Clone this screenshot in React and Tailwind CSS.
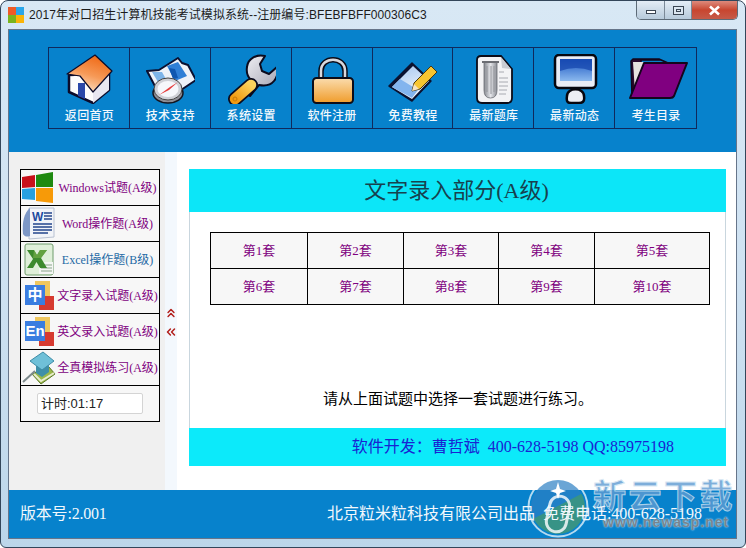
import React from 'react';
import { ChevronsUp, ChevronsLeft } from 'lucide-react';

const sans = 'font-["Liberation_Sans","Noto_Sans_CJK_SC",sans-serif]';
const serif = 'font-["Liberation_Serif","Noto_Sans_CJK_SC",serif]';

const HomeIcon = () => (
  <svg width="50" height="50" viewBox="0 0 50 50">
    <defs>
      <linearGradient id="roof" x1="0.75" y1="0" x2="0.35" y2="1">
        <stop offset="0" stopColor="#ef6510" />
        <stop offset="0.55" stopColor="#f69a58" />
        <stop offset="1" stopColor="#fde3c8" />
      </linearGradient>
    </defs>
    <path d="M5 21 V38 L29 49 L45 36 V18 L29 20 Z" fill="#fdfcfc" stroke="#0b0b2a" strokeWidth="2.5" strokeLinejoin="round" />
    <path d="M29 49 L45 36 V20 L29 38 Z" fill="#e9e7f0" />
    <path d="M3 20 L31 1 L48 17 L29 38 L16 22 Z" fill="url(#roof)" stroke="#0b0b2a" strokeWidth="1.2" strokeLinejoin="round" />
    <path d="M14 29 H21 V45 L14 42 Z" fill="#2a47a8" />
  </svg>
);

const CompassIcon = () => (
  <svg width="50" height="50" viewBox="0 0 50 50">
    <path d="M2 17 L14 16 L33 4 L37 9 L43 11 L51 26 L36 36 L12 36 Z" fill="#eef2f8" stroke="#0b1030" strokeWidth="2" strokeLinejoin="round" />
    <path d="M7 18 L17 18 L22 27 L13 28 Z" fill="#7db4e8" />
    <path d="M22 12 L33 8 L42 22 L30 27 Z" fill="#2f7fd6" />
    <path d="M24 14 L30 15 L33 24 L28 25 Z" fill="#0f57b0" />
    <ellipse cx="23" cy="39" rx="15" ry="10" fill="#8d8d95" stroke="#15151f" strokeWidth="1.5" />
    <ellipse cx="23" cy="35" rx="14" ry="11" fill="#cfd0d6" stroke="#444" strokeWidth="1" />
    <ellipse cx="23" cy="35" rx="10.5" ry="8" fill="#f6f7fb" />
    <path d="M14 41 L25 33 L33 28 L24 36 Z" fill="#e63b3b" />
  </svg>
);

const WrenchIcon = () => (
  <svg width="50" height="50" viewBox="0 0 50 50">
    <defs>
      <linearGradient id="steel" x1="0" y1="0" x2="1" y2="1">
        <stop offset="0" stopColor="#f4f4f8" />
        <stop offset="1" stopColor="#9d9dac" />
      </linearGradient>
      <linearGradient id="grip" x1="0" y1="1" x2="1" y2="0">
        <stop offset="0" stopColor="#f29a10" />
        <stop offset="1" stopColor="#fbd25c" />
      </linearGradient>
    </defs>
    <path d="M39 2 C31 0 22 4 21 13 C20 19 22 23 25 26 L16 35 L24 42 L33 31 C38 32 44 32 48 27 C52 22 52 17 51 13 L43 20 L36 17 L34 10 Z" fill="url(#steel)" stroke="#0b0b1e" strokeWidth="2" strokeLinejoin="round" />
    <path d="M9 45 L25 31" stroke="#0b0b1e" strokeWidth="14" strokeLinecap="round" />
    <path d="M9 45 L25 31" stroke="url(#grip)" strokeWidth="10.5" strokeLinecap="round" />
    <circle cx="9" cy="45" r="2" fill="none" stroke="#c97a08" strokeWidth="1" />
  </svg>
);

const LockIcon = () => (
  <svg width="50" height="50" viewBox="0 0 50 50">
    <defs>
      <linearGradient id="lock" x1="0" y1="0" x2="0" y2="1">
        <stop offset="0" stopColor="#fadcae" />
        <stop offset="1" stopColor="#f09c2a" />
      </linearGradient>
    </defs>
    <path d="M14 26 V17 C14 2 38 2 38 17 V26" fill="none" stroke="#0c0c18" strokeWidth="5.5" />
    <path d="M14 26 V17 C14 2 38 2 38 17 V26" fill="none" stroke="#d9d9de" strokeWidth="2.5" />
    <rect x="6" y="24" width="40" height="25" rx="3.5" fill="url(#lock)" stroke="#0c0c18" strokeWidth="2" />
  </svg>
);

const BookIcon = () => (
  <svg width="50" height="50" viewBox="0 0 50 50">
    <defs>
      <linearGradient id="page" x1="0.2" y1="0" x2="0.6" y2="1">
        <stop offset="0" stopColor="#a9c9f0" />
        <stop offset="1" stopColor="#f6f9fd" />
      </linearGradient>
    </defs>
    <path d="M2 32 L25 9 L44 27 L25 47 Z" fill="#0b1230" stroke="#0b1230" strokeWidth="1.5" strokeLinejoin="round" />
    <path d="M5 33 L26 12 L42 27 L25 45 Z" fill="url(#page)" />
    <path d="M5 33 L13 25 L31 36 L25 44 Z" fill="#83b4ee" />
    <path d="M25 37 L27 29 L44 12 L50 18 L33 35 Z" fill="#f7c531" stroke="#4a3a10" strokeWidth="1" strokeLinejoin="round" />
    <path d="M25 37 L27 30 L32 35 Z" fill="#f6e2c0" />
  </svg>
);

const ArchiveIcon = () => (
  <svg width="50" height="50" viewBox="0 0 50 50">
    <defs>
      <linearGradient id="tube" x1="0" y1="0" x2="1" y2="0">
        <stop offset="0" stopColor="#85888f" />
        <stop offset="0.5" stopColor="#e5e6ea" />
        <stop offset="1" stopColor="#8a8d94" />
      </linearGradient>
    </defs>
    <path d="M13 2 H33 L44 15 V44 Q44 49 39 49 H14 Q9 49 9 44 V6 Q9 2 13 2 Z" fill="#f3f3f5" stroke="#0c0c18" strokeWidth="1.8" />
    <path d="M33 3 L34 14 L43 15 Z" fill="#c9ccd2" />
    <path d="M31 24 H40 M31 28 H40 M31 32 H40 M31 36 H39 M31 40 H38 M31 18 H36" stroke="#a8aab1" strokeWidth="1" />
    <path d="M16 8 H29 V36 Q29 44 22.5 44 Q16 44 16 36 Z" fill="url(#tube)" stroke="#6b6d73" strokeWidth="0.8" />
    <path d="M14 8 H31" stroke="#6b6d73" strokeWidth="2" />
    <path d="M19 12 V38 M23 12 V40 M26 12 V38" stroke="#93959b" strokeWidth="1" />
  </svg>
);

const MonitorIcon = () => (
  <svg width="50" height="50" viewBox="0 0 50 50">
    <defs>
      <linearGradient id="screen" x1="0" y1="0" x2="0" y2="1">
        <stop offset="0" stopColor="#1a56c2" />
        <stop offset="1" stopColor="#8bb9ee" />
      </linearGradient>
    </defs>
    <path d="M18 42 C18 33 35 33 35 42 C36 48 33 49 30 49 H22 C19 49 17 48 18 42 Z" fill="#eceef4" stroke="#07070f" strokeWidth="2.5" />
    <rect x="6" y="1" width="41" height="33" rx="4" fill="#e9edf6" stroke="#07070f" strokeWidth="2.5" />
    <rect x="11" y="5" width="32" height="22" fill="url(#screen)" />
    <path d="M11 5 H43 V17 Q27 11 11 17 Z" fill="#1747ad" opacity="0.75" />
  </svg>
);

const FolderIcon = () => (
  <svg width="50" height="50" viewBox="0 0 50 50" className="overflow-visible">
    <path d="M0 7 L1 44 L10 44 L10 6 L30 6 L37 9 L28 5 L2 5 Z" fill="#2a0a2e" stroke="#12061a" strokeWidth="1.5" strokeLinejoin="round" />
    <path d="M2 8 H13 L4 38 Z" fill="#e6e3df" />
    <path d="M13 9 L56 9 L43 42 Q42 44 39 44 L-1 44 Z" fill="#800080" stroke="#15051c" strokeWidth="2" strokeLinejoin="round" />
  </svg>
);

const tools = [
  { label: '返回首页', Icon: HomeIcon },
  { label: '技术支持', Icon: CompassIcon },
  { label: '系统设置', Icon: WrenchIcon },
  { label: '软件注册', Icon: LockIcon },
  { label: '免费教程', Icon: BookIcon },
  { label: '最新题库', Icon: ArchiveIcon },
  { label: '最新动态', Icon: MonitorIcon },
  { label: '考生目录', Icon: FolderIcon },
];

const WinTile = () => (
  <svg width="36" height="35" viewBox="0 0 36 35">
    <path d="M1 7 L14 5 V17 L1 18 Z" fill="#c8101a" />
    <path d="M15 5 L32 2 V17 L15 17 Z" fill="#1f8a10" />
    <path d="M1 19 L14 18 V30 L1 29 Z" fill="#27a0e0" />
    <path d="M15 18 H32 V33 L15 31 Z" fill="#f79a08" />
  </svg>
);

const WordTile = () => (
  <svg width="36" height="35" viewBox="0 0 36 35">
    <path d="M8 2 H33 V31 L8 33 Z" fill="#f2f4f8" stroke="#b9c2d2" />
    <path d="M2 28 C1 16 3 7 9 2 L9 30 C6 31 4 31 2 28 Z" fill="#7d97c6" />
    <text x="11" y="15" fontSize="12" fontWeight="700" fill="#1d4a9e" fontFamily="Liberation Sans">W</text>
    <path d="M23 7 H31 M23 10 H31 M23 13 H31 M12 18 H31 M12 21 H31 M12 24 H31 M12 27 H27" stroke="#24468c" strokeWidth="1.3" />
  </svg>
);

const ExcelTile = () => (
  <svg width="36" height="35" viewBox="0 0 36 35">
    <rect x="4" y="2" width="28" height="31" rx="2" fill="#dfefd9" stroke="#6f9c6c" />
    <path d="M18 20 H32 V32 H18 Z" fill="#f4f6f4" />
    <path d="M20 23 H31 M20 26 H31 M20 29 H31" stroke="#8aa58a" />
    <path d="M6 8 H13 L16 13 L19 8 H26 L20 16 L26 26 H19 L15.500 20 L12 26 H6 L12 17 Z" fill="#3d8a2e" />
    <path d="M13 8 L16 13 L19 8 H26 L20 16 H12 Z" fill="#74ad48" opacity="0.7" />
  </svg>
);

const LangTile = ({ text, size }) => (
  <svg width="36" height="35" viewBox="0 0 36 35">
    <rect x="14" y="3" width="15" height="16" fill="#efc75e" />
    <rect x="18" y="18" width="15" height="14" fill="#d63a30" />
    <rect x="4" y="7" width="20" height="20" fill="#3a7de0" />
    <text x="14" y="22" textAnchor="middle" fontSize={size} fontWeight="700" fill="#ffffff" fontFamily="Liberation Sans, Noto Sans CJK SC">{text}</text>
  </svg>
);

const CapTile = () => (
  <svg width="36" height="35" viewBox="0 0 36 35">
    <path d="M11 24 L28 17 L34 24 L20 34 Z" fill="#9ab84a" stroke="#5d7a2a" />
    <path d="M13 24 L20 31 L33 23" fill="none" stroke="#e8eccf" strokeWidth="2" />
    <path d="M15 16 V23 L21 27 L28 22 V15 Z" fill="#3f8fa8" />
    <path d="M9 11 L22 2 L33 11 L21 20 Z" fill="#6fc0d8" stroke="#3e8ca6" />
    <path d="M2 32 L14 21" stroke="#7d8a8c" strokeWidth="2" />
  </svg>
);

const menus = [
  { label: 'Windows试题(A级)', color: 'text-[#800080]', Tile: WinTile },
  { label: 'Word操作题(A级)', color: 'text-[#800080]', Tile: WordTile },
  { label: 'Excel操作题(B级)', color: 'text-[#1f6aa5]', Tile: ExcelTile },
  { label: '文字录入试题(A级)', color: 'text-[#800080]', Tile: () => <LangTile text="中" size={15} /> },
  { label: '英文录入试题(A级)', color: 'text-[#800080]', Tile: () => <LangTile text="En" size={15} /> },
  { label: '全真模拟练习(A级)', color: 'text-[#800080]', Tile: CapTile },
];

const sets = ['第1套', '第2套', '第3套', '第4套', '第5套', '第6套', '第7套', '第8套', '第9套', '第10套'];

const Watermark = () => (
  <div className="absolute left-[527px] top-[476px] flex items-start">
    <svg width="62" height="62" viewBox="0 0 62 62">
      <defs>
        <clipPath id="disc">
          <circle cx="31" cy="31" r="27" />
        </clipPath>
      </defs>
      <circle cx="31" cy="31" r="29.5" fill="none" stroke="#ffffff" strokeOpacity="0.7" strokeWidth="2" />
      <g clipPath="url(#disc)" opacity="0.7">
        <rect width="62" height="62" fill="#2b7fc4" />
        <path d="M0 62 V46 L62 14 V62 Z" fill="#4c9a68" />
      </g>
      <path d="M31 6 L33 13 L39 15 L33 17 L31 23 L29 17 L23 15 L29 13 Z" fill="#ffffff" />
      <rect x="21" y="20" width="20" height="36" rx="10" fill="none" stroke="#ffffff" strokeOpacity="0.8" strokeWidth="3" transform="rotate(12 31 38)" />
    </svg>
    <div className="ml-[4px] pt-[3px] flex flex-col items-start">
      <div className={`${sans} text-[33px] leading-[35px] font-bold tracking-[2.500px] whitespace-nowrap text-[#5f9bd2] [-webkit-text-stroke:1px_#d2e4f2] opacity-80`}>新云下载</div>
      <div className={`${sans} ml-[10px] text-[14px] leading-[16px] font-bold tracking-[1px] whitespace-nowrap text-[#76858f] [text-shadow:0_0_2px_#ffffff]`}>www.newasp.net</div>
    </div>
  </div>
);

export default function App() {
  return (
    <div className={`${sans} relative w-[746px] h-[548px] overflow-hidden bg-white`}>
      <div className="w-full h-full rounded-t-[8px] rounded-b-[6px] border border-[#33465a] bg-gradient-to-b from-[#d8e8f5] via-[#cfe2f2] to-[#bcd6ea] flex flex-col">
        {/* title bar */}
        <div className="h-[28px] flex items-start justify-between shrink-0">
          <div className="flex items-center h-[28px] pl-[7px]">
            <svg width="16" height="16" viewBox="0 0 16 16">
              <rect width="8" height="8" fill="#ee5a26" />
              <rect x="8" width="8" height="8" fill="#29a6ea" />
              <rect y="8" width="8" height="8" fill="#7ab41c" />
              <rect x="8" y="8" width="8" height="8" fill="#fab408" />
            </svg>
            <span className="ml-[5px] text-[12px] tracking-[0.07px] text-[#1c1c1c] whitespace-nowrap">2017年对口招生计算机技能考试模拟系统--注册编号:BFEBFBFF000306C3</span>
          </div>
          <div className="flex h-[19px] mr-[7px] rounded-b-[5px] border border-t-0 border-[#5d6b78] overflow-hidden">
            <div className="w-[28px] flex items-center justify-center border-r border-[#7b8997] bg-gradient-to-b from-[#e4edf6] to-[#b7cadb]">
              <div className="w-[10px] h-[4px] mt-[3px] border border-[#3b4653] bg-white" />
            </div>
            <div className="w-[27px] flex items-center justify-center border-r border-[#7b8997] bg-gradient-to-b from-[#e4edf6] to-[#b7cadb]">
              <div className="w-[11px] h-[9px] border border-[#3b4653] flex items-center justify-center bg-[#dbe6f0]">
                <div className="w-[5px] h-[3px] border border-[#3b4653]" />
              </div>
            </div>
            <div className="w-[45px] flex items-center justify-center bg-gradient-to-b from-[#dd8a7c] via-[#c8452f] to-[#c55a48]">
              <svg width="13" height="11" viewBox="0 0 13 11">
                <path d="M2 1.5 L11 9.5 M11 1.5 L2 9.5" stroke="#ffffff" strokeWidth="2.6" />
              </svg>
            </div>
          </div>
        </div>

        {/* client area */}
        <div className="ml-[7px] w-[729px] h-[510px] border border-[#66758a] flex flex-col shrink-0">
          <div className="h-[122px] bg-[#0782cc] pt-[17px] pl-[39px] shrink-0">
            <div className="w-[649px] h-[82px] grid grid-cols-8 border border-[#10295c]">
              {tools.map(({ label, Icon }, i) => (
                <div key={label} className={`flex flex-col items-center pt-[6px] ${i < 7 ? 'border-r border-[#10295c]' : ''}`}>
                  <Icon />
                  <span className="mt-[4px] pl-[1px] text-[12px] leading-[16px] tracking-[0.3px] font-medium text-[#f2f8fc]">{label}</span>
                </div>
              ))}
            </div>
          </div>

          <div className="flex flex-1 min-h-0 bg-white">
            {/* side menu */}
            <div className="w-[156px] bg-[#f0f0f0] pt-[17px] pl-[11px] shrink-0">
              <div className="w-[140px] border border-black bg-[#f7f7f7]">
                {menus.map(({ label, color, Tile }) => (
                  <div key={label} className="h-[36px] flex items-center border-b border-black">
                    <div className="w-[36px] shrink-0 flex">
                      <Tile />
                    </div>
                    <span className={`${serif} ${color} flex-1 -ml-[1px] text-center text-[12px] whitespace-nowrap`}>{label}</span>
                  </div>
                ))}
                <div className="h-[35px] flex items-center justify-center">
                  <div className="w-[106px] h-[21px] pl-[3px] flex items-center rounded-[2px] border border-[#d4d4d4] bg-white text-[13px] text-[#222]">计时:01:17</div>
                </div>
              </div>
            </div>

            {/* collapse strip */}
            <div className="w-[12px] bg-[#f3f8fd] pt-[154px] flex flex-col items-center gap-[5px] shrink-0 text-[#b3201c]">
              <ChevronsUp size={14} strokeWidth={2.6} />
              <ChevronsLeft size={14} strokeWidth={2.6} />
            </div>

            {/* main */}
            <div className="flex-1 pl-[12px] pr-[10px] pt-[17px]">
              <div className="h-[43px] bg-[#0ce6f8] flex items-center justify-center pr-[2px]">
                <span className={`${serif} text-[22px] text-[#17414e]`}>文字录入部分(A级)</span>
              </div>
              <div className="h-[216px] border-x border-[#c9d6de] pt-[20px] pl-[20px]">
                <div className="w-[500px] grid grid-cols-[96px_95px_94px_95px_114px] grid-rows-[35px_35px] gap-px p-px bg-black">
                  {sets.map(s => (
                    <div key={s} className={`${serif} bg-[#f7f7f7] flex items-center justify-center text-[13px] text-[#800080]`}>{s}</div>
                  ))}
                </div>
                <p className={`${serif} mt-[84px] ml-[113px] text-[15px] leading-[20px] text-black whitespace-nowrap`}>请从上面试题中选择一套试题进行练习。</p>
              </div>
              <div className="h-[38px] bg-[#0ceafa] flex items-center justify-end pr-[52px]">
                <span className={`${serif} text-[16px] text-[#1a22d2] whitespace-nowrap`}>软件开发：曹哲斌&nbsp;&nbsp;400-628-5198 QQ:85975198</span>
              </div>
            </div>
          </div>

          <div className={`${serif} h-[48px] bg-[#0782cc] flex items-center justify-between pl-[11px] pr-[34px] text-[16px] text-[#f2f8fc] whitespace-nowrap shrink-0`}>
            <span className="tracking-[-0.2px]">版本号:2.001</span>
            <span className="relative z-10">北京粒米粒科技有限公司出品&nbsp;&nbsp;免费电话:400-628-5198</span>
          </div>
        </div>
      </div>
      <Watermark />
    </div>
  );
}
